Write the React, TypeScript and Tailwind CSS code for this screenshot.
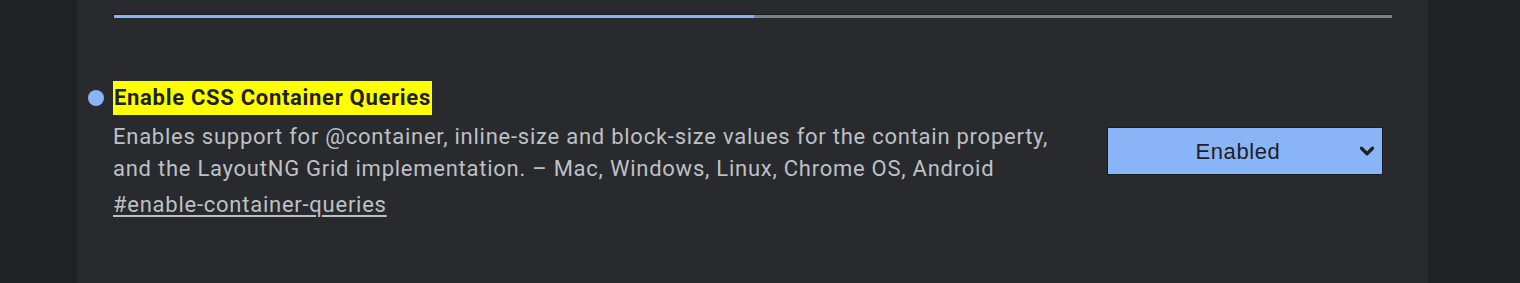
import { ChevronDown } from 'lucide-react';

export default function App() {
  return (
    <div className="flex justify-center w-full h-[283px] bg-[#202124] font-['Roboto',sans-serif] overflow-hidden">
      <div className="flex flex-col w-[1351px] ml-[-15px] h-full bg-[#292a2d] px-[36px]">
        <div className="flex w-[1279px] h-[4px] mt-[14px] bg-[#1b1c1f] p-[0.5px]">
          <div className="w-[640px] h-full bg-[#8ab4f8]" />
          <div className="grow h-full bg-[#7c7f85]" />
        </div>

        <div className="flex items-start justify-between mt-[63px]">
          <div className="flex flex-col">
            <div className="relative flex items-center">
              <span className="absolute left-[-25px] w-[16px] h-[16px] rounded-full bg-[#8ab4f8]" />
              <h2 className="bg-[#ffff00] text-[#202124] font-bold text-[22px] tracking-[0.7px] leading-[34px] px-[1px]">
                Enable CSS Container Queries
              </h2>
            </div>
            <p className="mt-[6px] text-[#bdc1c6] text-[22px] tracking-[0.75px] leading-[32px] w-[960px]">
              Enables support for @container, inline-size and block-size values for the contain property, and the LayoutNG Grid implementation. – Mac, Windows, Linux, Chrome OS, Android
            </p>
            <a className="mt-[4px] text-[#bdc1c6] text-[22px] tracking-[0.75px] leading-[32px] underline underline-offset-[3px] self-start">
              #enable-container-queries
            </a>
          </div>

          <div className="flex items-center justify-between w-[276px] h-[48px] mt-[46px] mr-[9px] bg-[#8ab4f8] border border-[#1b1c1f] pl-[12px] pr-[4px] text-[#202124]">
            <span className="grow text-center text-[22px] tracking-[0.6px] font-['Liberation_Sans',sans-serif]">Enabled</span>
            <ChevronDown className="w-[22px] h-[22px]" strokeWidth={3.5} />
          </div>
        </div>
      </div>
    </div>
  );
}
